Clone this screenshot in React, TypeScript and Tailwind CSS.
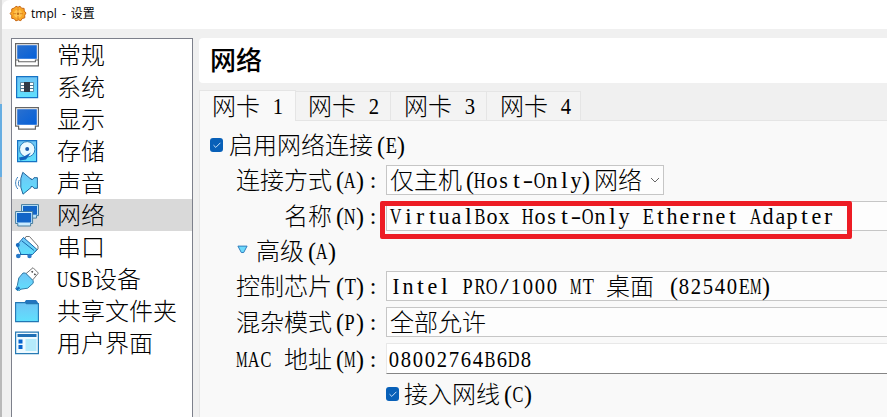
import type { ReactNode } from "react";

/** Horizontal squeeze that fits a serif glyph into its 12px half-width cell. */
function squeeze(ch: string) {
  if (ch === "M") return "scale-x-[0.54]";
  if (/[ADHNOVCBRU]/.test(ch)) return "scale-x-[0.68]";
  if (/[ETPX]/.test(ch)) return "scale-x-[0.76]";
  if (/[a-z]/.test(ch)) return /[iltr]/.test(ch) ? "scale-x-[1.02]" : "scale-x-[0.92]";
  if (/[-/]/.test(ch)) return "scale-x-[1.3]";
  if (ch === "(") return "translate-x-[2px] scale-y-[1.08]";
  if (ch === ")") return "-translate-x-[2px] scale-y-[1.08]";
  if (ch === ":") return "-translate-x-[1px]";
  return "scale-x-[0.86]";
}

/** Splits a label into full-width Chinese runs and half-width Latin cells on a 24px / 12px grid. */
function Txt({ children }: { children: string }) {
  const runs = children.match(/[\u3000-\u9fff]+|[^\u3000-\u9fff]+/g) ?? [];
  return (
    <span className="inline-flex h-6 items-center pb-[2px] whitespace-pre font-['Noto_Sans_CJK_SC',sans-serif] text-[24px] leading-6 font-light">
      {runs.map((run, i) =>
        /[\u3000-\u9fff]/.test(run) ? (
          <span key={i}>{run}</span>
        ) : (
          <span key={i} className="mt-[2px] flex font-['Liberation_Serif',serif]">
            {[...run].map((ch, j) => (
              <span key={j} className="inline-flex w-3 justify-center">
                <span className={`inline-block ${squeeze(ch)}`}>{ch}</span>
              </span>
            ))}
          </span>
        ),
      )}
    </span>
  );
}

function Icon({ children }: { children: ReactNode }) {
  return (
    <svg viewBox="0 0 24 24" className="h-6 w-6 shrink-0" fill="none">
      <defs>
        <linearGradient id="sky" x1="0" y1="0" x2="0" y2="1">
          <stop offset="0" stopColor="#70c4f5" />
          <stop offset="1" stopColor="#5fe0fd" />
        </linearGradient>
        <linearGradient id="screen" x1="0" y1="0" x2="1" y2="1">
          <stop offset="0" stopColor="#2a70cf" />
          <stop offset="1" stopColor="#0560d8" />
        </linearGradient>
      </defs>
      {children}
    </svg>
  );
}

const items: { label: string; icon: ReactNode }[] = [
  {
    label: "常规",
    icon: (
      <>
        <path d="M.6 .6h22.8v22.2H.6z" fill="#fff" stroke="#666" strokeWidth="1.2" />
        <path d="M2.2 2.2h19.6v13.6H2.2z" fill="url(#screen)" />
        <path d="M.6 17h3v1.7h16.8V17h3" stroke="#666" strokeWidth="1.1" />
      </>
    ),
  },
  {
    label: "系统",
    icon: (
      <>
        <path d="M1.6 1.6h21v21h-21z" fill="url(#sky)" stroke="#1673c4" strokeWidth="1.2" />
        <path d="M5.5 7.5h13v9h-13z" fill="#fff" stroke="#4a7793" strokeWidth=".8" />
        <path d="M5.5 10.5h13M5.5 13.5h13" stroke="#4a7793" />
        <path d="M9 7h6v10H9z" fill="#303946" />
      </>
    ),
  },
  {
    label: "显示",
    icon: (
      <>
        <path d="M.6 .6h22.8v18.6h-3v2.9H3.6v-2.9h-3z" fill="#fff" stroke="#666" strokeWidth="1.2" />
        <path d="M2.2 2.2h19.6v15.6H2.2z" fill="url(#screen)" />
      </>
    ),
  },
  {
    label: "存储",
    icon: (
      <>
        <path d="M2.6 1.6h19v21h-19z" fill="url(#sky)" stroke="#1673c4" strokeWidth="1.2" />
        <circle cx="12.2" cy="10.3" r="7.7" fill="#eaf9ff" stroke="#287db9" />
        <circle cx="12.2" cy="10" r="2" fill="#1c5dae" />
        <path d="M4 18.5l5-1 7-4-5 7-6 1z" fill="#1262bd" />
      </>
    ),
  },
  {
    label: "声音",
    icon: (
      <>
        <path
          d="M5.8 7.6L7.8 1.3l7.4 6.2h.9v1h1.5l1.4-1.8h3.4v10.6H19l-1.4-1.8h-1.5v1L8 23.2l-2.2-7z"
          fill="url(#sky)"
          stroke="#23669c"
        />
        <path d="M4.3 9c-1.2 2-1.2 4.5 0 6.5M2.8 6c-2.9 3.5-2.9 8.5 0 12" stroke="#3c80bd" />
      </>
    ),
  },
  {
    label: "网络",
    icon: (
      <>
        <path d="M6.5 1.6h17v11h-2v2.5h-13v-2.5h-2z" fill="#bce5fb" stroke="#477d9e" />
        <path d="M8 3h14v8.7H8z" fill="#1265c7" />
        <path d="M.6 8.5h17v12h-2V23H2.8v-2.5H.6z" fill="#c8ebff" stroke="#477d9e" />
        <path d="M2 10h14.2v9.5H2z" fill="#1265c7" />
      </>
    ),
  },
  {
    label: "串口",
    icon: (
      <>
        <path d="M11 1.5h3.5L23 11v3l-3 3L9 5z" fill="#fff" stroke="#777" />
        <path d="M8.5 2.500l13.500 12-4.500 5H6l-4-9.500z" fill="url(#sky)" stroke="#1966aa" />
        <path d="M7 6l12 9.500M5 19.500h11" stroke="#1966aa" />
        <circle cx="2.8" cy="10" r="2" fill="#176cbf" />
        <circle cx="3.3" cy="21" r="2.3" fill="#2879c9" />
        <circle cx="14.5" cy="21" r="2.2" fill="#2879c9" />
      </>
    ),
  },
  {
    label: "USB设备",
    icon: (
      <>
        <path d="M18 .7l5.400 5.400-6 7.200-6.600-6.500z" fill="#fff" stroke="#777" />
        <path d="M16.600 4.200l1.200 1.200M19.300 6.800l1.200 1.200" stroke="#444" strokeWidth="1.5" />
        <path
          d="M10.500 6l7.700 7.700v2.500l-5.500 5-6.700 1L3.500 24 .7 22l1.600-3.500 1.500-7.500L8 6z"
          fill="url(#sky)"
          stroke="#327ca8"
        />
        <path d="M.7 21.9l2.800-2.500 1.900 1.900-3.200 2.200z" fill="#1769bb" />
      </>
    ),
  },
  {
    label: "共享文件夹",
    icon: (
      <>
        <path d="M9 4l2-3h10l2 2.500V6H9z" fill="#2374be" />
        <path d="M.6 3.600h9.500l1.500 1h11.800v18H.6z" fill="url(#sky)" stroke="#2277b4" strokeWidth="1.1" />
      </>
    ),
  },
  {
    label: "用户界面",
    icon: (
      <>
        <path d="M.6 1.2h22.800v21.400H.6z" fill="#effaff" stroke="#287bb5" strokeWidth="1.2" />
        <path d="M2.500 3h19v3h-19z" fill="#1f6fb5" />
        <path d="M3.500 8.500h4v4h-4zM3.500 14h4v4h-4z" fill="#0764ce" />
        <path d="M10.500 8h11v12h-11z" fill="#b5ebfb" />
      </>
    ),
  },
];

const tabs = [
  { label: "网卡 2", size: "w-[95px] pl-[12px]" },
  { label: "网卡 3", size: "w-[96px] pl-[13px]" },
  { label: "网卡 4", size: "w-[94px] pl-[13px]" },
];

function Check() {
  return (
    <span className="flex h-[14px] w-[13px] shrink-0 items-center justify-center rounded-[3px] bg-[#0860b8]">
      <svg viewBox="0 0 12 12" className="h-3 w-3" fill="none" stroke="#c9e2fa">
        <path d="M2.5 6.2l2.3 2.2 4.6-4.6" />
      </svg>
    </span>
  );
}

function Row({ label, children, className }: { label: string; children: ReactNode; className: string }) {
  return (
    <div className={`flex items-center ${className}`}>
      <div className="flex w-[180px] shrink-0 justify-end">
        <Txt>{label}</Txt>
      </div>
      <div className="ml-[6px] flex h-full min-w-0 flex-1">{children}</div>
    </div>
  );
}

const field = "flex h-full items-center border bg-[#fdfdfd] pl-[3px]";

export default function App() {
  return (
    <div className="relative flex h-[417px] w-[887px] overflow-hidden bg-[#f0f0f0] text-black">
      <div className="flex w-[2px] shrink-0 flex-col">
        <div className="h-[104px] bg-[#d8d8d8]" />
        <div className="h-[73px] bg-[#67aee2]" />
        <div className="flex-1 bg-[#b9b9b9]" />
      </div>
      <div className="flex min-w-0 flex-1 flex-col">
        <header className="flex h-[29px] shrink-0 items-center rounded-tl-lg bg-white pb-[2px] pl-[7px]">
          <svg viewBox="0 0 18 18" className="h-[18px] w-[18px]">
            <path
              d="M7 1.2l2 1 2-1 1.5 2 2.6.2.1 2.6 1.8 2-1.3 2.2.1 2.6-2.6.7-1.4 2.2-2.5-.8-2.4 1-1.6-2.1-2.6-.5.1-2.6L1.2 8.6l1.5-2.1.1-2.6L5.4 3z"
              fill="#f9a727"
              stroke="#c96813"
            />
            <circle cx="9" cy="8.7" r="4" fill="#ffc34d" />
            <circle cx="9" cy="8.7" r="1.2" fill="#bd6c19" />
            <path d="M9 3.5v3M9 11v3M4 8.7h3M11 8.7h3" stroke="#dc8523" />
          </svg>
          <span className="ml-[4px] whitespace-pre font-['Open_Sans','Noto_Sans_CJK_SC',sans-serif] text-[12px] leading-4 [word-spacing:2px]">
            tmpl - 设置
          </span>
        </header>
        <div className="flex min-h-0 flex-1 pt-[9px]">
          <aside className="ml-[9px] w-[182px] shrink-0 border border-b-0 border-[#7d808b] bg-white">
            {items.map((it) => (
              <div
                key={it.label}
                className={`flex h-8 items-center gap-[18px] pl-[3px] ${it.label === "网络" ? "bg-[#d9d9d9]" : ""}`}
              >
                <Icon>{it.icon}</Icon>
                <Txt>{it.label}</Txt>
              </div>
            ))}
          </aside>
          <main className="ml-[6px] flex min-w-0 flex-1 flex-col">
            <h1 className="flex h-[45px] shrink-0 items-center rounded-l bg-white pb-[4px] pl-[11px] font-['Noto_Sans_CJK_SC',sans-serif] text-[26px] leading-[26px] font-medium">
              网络
            </h1>
            <div className="mt-[7px] flex h-[31px] shrink-0 items-end">
              <div className="flex h-[31px] w-[97px] items-center border border-b-0 border-[#e5e5e5] bg-[#f9f9f9] pl-[12px]">
                <Txt>网卡 1</Txt>
              </div>
              {tabs.map((t) => (
                <div
                  key={t.label}
                  className={`flex h-[30px] items-center border-y border-r border-[#e5e5e5] bg-[#f3f3f3] ${t.size}`}
                >
                  <Txt>{t.label}</Txt>
                </div>
              ))}
              <div className="h-px flex-1 bg-[#e5e5e5]" />
            </div>
            <section className="flex min-h-0 flex-1 flex-col border-l border-[#e5e5e5] bg-[#f9f9f9]">
              <div className="mt-[11px] flex h-[26px] shrink-0 items-center gap-[6px] pl-[10px]">
                <Check />
                <Txt>启用网络连接(E)</Txt>
              </div>
              <Row label="连接方式(A):" className="mt-[7px] h-[30px] shrink-0">
                <div className={`${field} w-[278px] border-[#c6c6c6]`}>
                  <Txt>仅主机(Host-Only)网络</Txt>
                  <svg viewBox="0 0 10 6" className="ml-[8px] h-[6px] w-[10px]" fill="none" stroke="#666">
                    <path d="M1 1l4 4 4-4" />
                  </svg>
                </div>
              </Row>
              <Row label="名称(N):" className="mt-[6px] h-[30px] shrink-0">
                <div className={`${field} flex-1 border-r-0 border-[#c6c6c6]`}>
                  <Txt>VirtualBox Host-Only Ethernet Adapter</Txt>
                </div>
              </Row>
              <div className="mt-[6px] flex h-[28px] shrink-0 items-center gap-[8px] pl-[37px]">
                <svg viewBox="0 0 12 9" className="-mt-1 h-[9px] w-[11px]">
                  <path d="M1 .8h10L7.3 7.8H4.7z" fill="#6ed9fb" stroke="#2674b8" />
                </svg>
                <Txt>高级(A)</Txt>
              </div>
              <Row label="控制芯片(T):" className="mt-[6px] h-[30px] shrink-0">
                <div className={`${field} flex-1 border-r-0 border-[#c6c6c6]`}>
                  <Txt>Intel PRO/1000 MT 桌面 (82540EM)</Txt>
                </div>
              </Row>
              <Row label="混杂模式(P):" className="mt-[6px] h-[30px] shrink-0">
                <div className={`${field} flex-1 border-r-0 border-[#c6c6c6]`}>
                  <Txt>全部允许</Txt>
                </div>
              </Row>
              <Row label="MAC 地址(M):" className="mt-[6px] h-[31px] shrink-0">
                <div className="flex h-full flex-1 items-center border border-r-0 border-[#e8e8e8] border-b-[#858585] bg-white pl-[1px]">
                  <Txt>08002764B6D8</Txt>
                </div>
              </Row>
              <div className="mt-[7px] flex h-[26px] shrink-0 items-center gap-[5px] pl-[186px]">
                <Check />
                <Txt>接入网线(C)</Txt>
              </div>
            </section>
          </main>
        </div>
      </div>
      <div className="absolute top-[201px] left-[380px] h-[38px] w-[472px] rounded-[2px] border-[5px] border-[#ed1c24]" />
    </div>
  );
}
